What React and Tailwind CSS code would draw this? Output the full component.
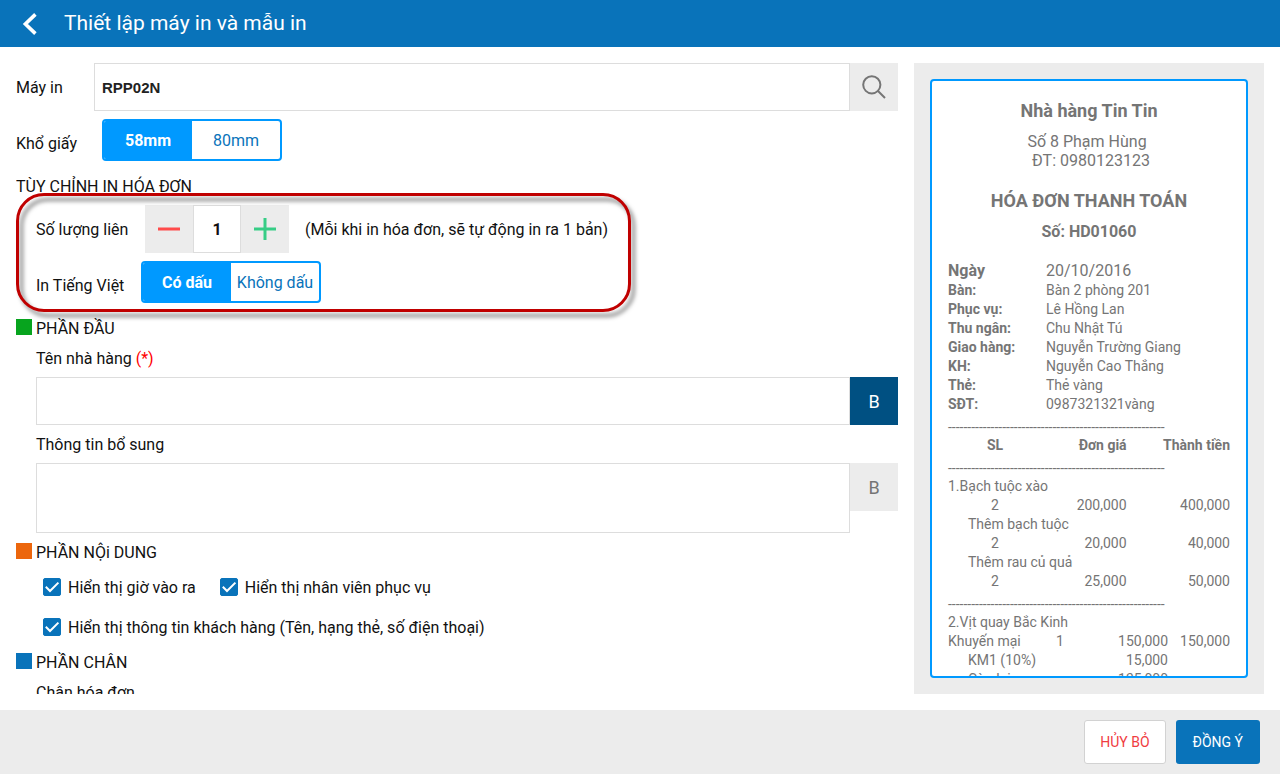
import { useState } from 'react'

const INFO_ROWS = [
  ['Bàn:', 'Bàn 2 phòng 201'],
  ['Phục vụ:', 'Lê Hồng Lan'],
  ['Thu ngân:', 'Chu Nhật Tú'],
  ['Giao hàng:', 'Nguyễn Trường Giang'],
  ['KH:', 'Nguyễn Cao Thắng'],
  ['Thẻ:', 'Thẻ vàng'],
  ['SĐT:', '0987321321vàng'],
]

const ITEMS = [
  { name: '1.Bạch tuộc xào', qty: '2', price: '200,000', total: '400,000' },
  { name: 'Thêm bạch tuộc', qty: '2', price: '20,000', total: '40,000', extra: true },
  { name: 'Thêm rau củ quả', qty: '2', price: '25,000', total: '50,000', extra: true },
]

const PROMO_ROWS = [
  { name: 'Khuyến mại', qty: '1', price: '150,000', total: '150,000' },
  { name: 'KM1 (10%)', qty: '', price: '15,000', total: '', extra: true },
  { name: 'Còn lại', qty: '', price: '135,000', total: '', extra: true },
]

function Segmented({ label, options, value, onChange }) {
  return (
    <div
      role="group"
      aria-label={label}
      className="grid grid-cols-2 w-[180px] h-[42px] self-start border-2 border-[#0099ff] rounded bg-white overflow-hidden"
    >
      {options.map((option) => (
        <button
          key={option}
          type="button"
          aria-pressed={value === option}
          onClick={() => onChange(option)}
          className={`pt-0.5 whitespace-nowrap ${
            value === option ? 'bg-[#0099ff] text-white font-bold' : 'text-[#0973ba]'
          }`}
        >
          {option}
        </button>
      ))}
    </div>
  )
}

function CheckOption({ children }) {
  return (
    <label className="flex items-center gap-[7px] h-8">
      <span className="relative block size-[18px]">
        <input
          type="checkbox"
          defaultChecked
          className="peer block appearance-none size-[18px] rounded-xs border border-[#0973ba] checked:bg-[#0973ba]"
        />
        <svg
          viewBox="0 0 18 18"
          className="absolute inset-0 size-[18px] pointer-events-none invisible peer-checked:visible"
          fill="none"
          stroke="#fff"
          strokeWidth="2"
        >
          <path d="M2.8 8.8 7 13 15.4 4.6" />
        </svg>
      </span>
      <span className="pt-0.5">{children}</span>
    </label>
  )
}

function SectionTitle({ color, children }) {
  return (
    <h2 className="flex items-start gap-1 h-9 leading-10">
      <span className={`size-4 mt-2.5 ${color}`} />
      {children}
    </h2>
  )
}

function BoldButton({ active, onClick }) {
  return (
    <button
      type="button"
      aria-pressed={active}
      onClick={onClick}
      className={`size-12 shrink-0 pt-0.5 text-lg ${active ? 'bg-[#005082] text-white' : 'bg-[#ececec] text-[#757575]'}`}
    >
      B
    </button>
  )
}

function Dashes() {
  return <div className="h-[22px] pt-1 whitespace-nowrap">{'-'.repeat(56)}</div>
}

function Receipt() {
  return (
    <div className="h-full border-2 border-[#0099ff] rounded bg-white px-4 pt-[18px] overflow-hidden text-sm leading-[19px] text-[#757575]">
      <div className="text-center text-base leading-[19px]">
        <h2 className="text-lg leading-6 font-bold">Nhà hàng Tin Tin</h2>
        <p className="mt-[9px]">Số 8 Phạm Hùng&nbsp;</p>
        <p>&nbsp;ĐT: 0980123123</p>
        <h3 className="mt-[19px] text-lg leading-6 font-bold">HÓA ĐƠN THANH TOÁN</h3>
        <p className="mt-[9px] font-bold">Số: HD01060</p>
      </div>

      <dl className="mt-[19px] grid grid-cols-[98px_1fr]">
        <dt className="text-base leading-[21px] font-bold">Ngày</dt>
        <dd className="text-base leading-[21px]">20/10/2016</dd>
        {INFO_ROWS.map(([label, value]) => (
          <div key={label} className="col-span-2 grid grid-cols-subgrid">
            <dt className="font-bold">{label}</dt>
            <dd>{value}</dd>
          </div>
        ))}
      </dl>

      <table className="w-full table-fixed">
        <colgroup>
          <col className="w-1/3" />
          <col className="w-[30%]" />
          <col />
        </colgroup>
        <thead>
          <tr>
            <td colSpan={3}><Dashes /></td>
          </tr>
          <tr>
            <th className="text-center font-bold">SL</th>
            <th className="text-right font-bold">Đơn giá</th>
            <th className="text-right font-bold">Thành tiền</th>
          </tr>
          <tr>
            <td colSpan={3}><Dashes /></td>
          </tr>
        </thead>
        {ITEMS.map((item) => (
          <tbody key={item.name}>
            <tr>
              <td colSpan={3} className={item.extra ? 'pl-5' : ''}>{item.name}</td>
            </tr>
            <tr>
              <td className="text-center">{item.qty}</td>
              <td className="text-right">{item.price}</td>
              <td className="text-right">{item.total}</td>
            </tr>
          </tbody>
        ))}
      </table>

      <Dashes />
      <p>2.Vịt quay Bắc Kinh</p>
      <table className="w-full table-fixed">
        <colgroup>
          <col className="w-[104px]" />
          <col className="w-4" />
          <col />
          <col className="w-[62px]" />
        </colgroup>
        <tbody>
          {PROMO_ROWS.map((row) => (
            <tr key={row.name}>
              <td className={row.extra ? 'pl-5' : ''}>{row.name}</td>
              <td className="text-center">{row.qty}</td>
              <td className="text-right">{row.price}</td>
              <td className="text-right">{row.total}</td>
            </tr>
          ))}
        </tbody>
      </table>
    </div>
  )
}

export default function App() {
  const [paper, setPaper] = useState('58mm')
  const [accent, setAccent] = useState('Có dấu')
  const [copies, setCopies] = useState(1)
  const [nameBold, setNameBold] = useState(true)
  const [extraBold, setExtraBold] = useState(false)

  return (
    <div className="flex flex-col h-screen bg-white font-[Roboto,sans-serif] text-base text-[#111111]">
      <header className="flex items-center h-[47px] shrink-0 bg-[#0973ba] text-white">
        <button type="button" aria-label="Quay lại" className="w-16 h-full pl-[22px]">
          <svg width="16" height="22" viewBox="0 0 16 22" fill="none" stroke="currentColor" strokeWidth="3.6">
            <path d="M13.4 1.4 3.4 11l10 9.6" />
          </svg>
        </button>
        <h1 className="text-[21px]">Thiết lập máy in và mẫu in</h1>
      </header>

      <main className="flex flex-1 min-h-0 gap-4 p-4">
        <form className="flex-1 min-w-0 overflow-hidden">
          <div className="flex items-center h-12">
            <label htmlFor="printer" className="w-[78px] pt-0.5">Máy in</label>
            <input
              id="printer"
              defaultValue="RPP02N"
              className="flex-1 min-w-0 h-full border border-[#dddddd] px-[7px] font-['Liberation_Sans',sans-serif] text-[15px] font-bold text-[#222222]"
            />
            <button type="button" aria-label="Tìm máy in" className="flex items-center justify-center size-12 bg-[#ececec] text-[#757575]">
              <svg width="24" height="24" viewBox="0 0 24 24" fill="none" stroke="currentColor" strokeWidth="2">
                <circle cx="9.8" cy="9.8" r="8.6" />
                <path d="m16 16 7 7" />
              </svg>
            </button>
          </div>

          <div className="flex items-center h-12 mt-2">
            <span className="w-[86px] pt-0.5">Khổ giấy</span>
            <Segmented label="Khổ giấy" options={['58mm', '80mm']} value={paper} onChange={setPaper} />
          </div>

          <h2 className="h-[38px] leading-10">TÙY CHỈNH IN HÓA ĐƠN</h2>

          <div className="relative pl-5">
            {/* Highlight frame around the print options */}
            <div className="absolute -top-3 -bottom-[3px] left-0 w-[615px] border-3 border-[#c00000] rounded-[28px] drop-shadow-[4px_5px_2px_rgba(0,0,0,0.5)] pointer-events-none" />
            <div className="flex items-center h-12 gap-4">
              <label htmlFor="copies" className="w-[93px] pt-0.5">Số lượng liên</label>
              <div className="flex">
                <button
                  type="button"
                  aria-label="Giảm"
                  onClick={() => setCopies(Math.max(1, copies - 1))}
                  className="flex items-center justify-center size-12 bg-[#ececec]"
                >
                  <svg width="24" height="24" viewBox="0 0 24 24" stroke="#ff4b4b" strokeWidth="3">
                    <path d="M1 12h22" />
                  </svg>
                </button>
                <input
                  id="copies"
                  value={copies}
                  onChange={(e) => setCopies(Number(e.target.value) || 1)}
                  className="size-12 border border-[#dddddd] text-center font-bold"
                />
                <button
                  type="button"
                  aria-label="Tăng"
                  onClick={() => setCopies(copies + 1)}
                  className="flex items-center justify-center size-12 bg-[#ececec]"
                >
                  <svg width="24" height="24" viewBox="0 0 24 24" stroke="#37cd86" strokeWidth="3">
                    <path d="M1 12h22M12 1v22" />
                  </svg>
                </button>
              </div>
              <span className="pt-0.5">(Mỗi khi in hóa đơn, sẽ tự động in ra {copies} bản)</span>
            </div>
            <div className="flex items-center h-12 gap-4 mt-2">
              <span className="w-[89px] pt-0.5">In Tiếng Việt</span>
              <Segmented label="In Tiếng Việt" options={['Có dấu', 'Không dấu']} value={accent} onChange={setAccent} />
            </div>
          </div>

          <SectionTitle color="bg-[#07a41e]">PHẦN ĐẦU</SectionTitle>
          <div className="pl-5">
            <label htmlFor="restaurant" className="block h-8 leading-7">
              Tên nhà hàng <span className="text-[#ff0000]">(*)</span>
            </label>
            <div className="flex">
              <input id="restaurant" className="flex-1 min-w-0 h-12 border border-[#dddddd] px-2" />
              <BoldButton active={nameBold} onClick={() => setNameBold(!nameBold)} />
            </div>
            <label htmlFor="extra" className="block h-[38px] leading-10">Thông tin bổ sung</label>
            <div className="flex items-start">
              <textarea id="extra" className="flex-1 min-w-0 h-[70px] border border-[#dddddd] p-2 resize-none" />
              <BoldButton active={extraBold} onClick={() => setExtraBold(!extraBold)} />
            </div>
          </div>

          <SectionTitle color="bg-[#ec660c]">PHẦN NỘi DUNG</SectionTitle>
          <div className="flex flex-col gap-2 mt-0.5 pl-[27px]">
            <div className="flex gap-6">
              <CheckOption>Hiển thị giờ vào ra</CheckOption>
              <CheckOption>Hiển thị nhân viên phục vụ</CheckOption>
            </div>
            <CheckOption>Hiển thị thông tin khách hàng (Tên, hạng thẻ, số điện thoại)</CheckOption>
          </div>

          <SectionTitle color="bg-[#0973ba]">PHẦN CHÂN</SectionTitle>
          <div className="pl-5">
            <label htmlFor="footer-text" className="block h-8 leading-7">Chân hóa đơn</label>
            <input id="footer-text" className="w-full h-12 border border-[#dddddd] px-2" />
          </div>
        </form>

        <aside className="w-[350px] shrink-0 bg-[#ececec] p-4">
          <Receipt />
        </aside>
      </main>

      <footer className="flex items-center justify-end gap-2.5 h-16 shrink-0 px-5 bg-[#ececec] text-sm">
        <button type="button" className="h-11 px-[15px] border border-[#d2d2d2] rounded-[3px] bg-white text-[#f03c41]">
          HỦY BỎ
        </button>
        <button type="button" className="h-11 px-[17px] rounded-[3px] bg-[#0973ba] text-white">
          ĐỒNG Ý
        </button>
      </footer>
    </div>
  )
}
